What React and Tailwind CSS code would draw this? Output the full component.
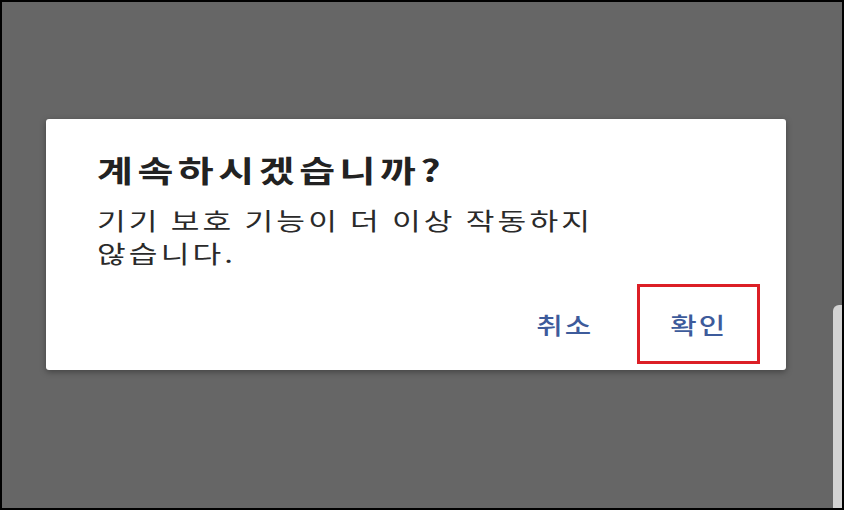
import React from 'react';

const FONT = { fontFamily: '"Noto Sans CJK KR", "Noto Sans", sans-serif' };

export default function App() {
  return (
    <div
      className="w-[844px] h-[510px] border-2 border-black bg-[#666666] flex overflow-hidden"
      style={FONT}
    >
      {/* dialog area */}
      <div className="flex-1 pl-[44px] pt-[117px]">
        <div className="w-[740px] h-[251px] bg-white rounded-[3px] shadow-[0_2px_6px_rgba(0,0,0,0.35)] flex flex-col">
          <div className="pl-[51px] pt-[30px]">
            <h1 className="origin-left scale-x-[1.3] text-[30px] leading-[40px] font-bold tracking-[3.5px] text-[#222]">
              계속하시겠습니까?
            </h1>
            <p className="origin-left scale-x-[1.3] mt-[14px] text-[24px] leading-[33px] tracking-[2.4px] text-[#2a2a2a]">
              기기 보호 기능이 더 이상 작동하지
              <br />
              않습니다.
            </p>
          </div>

          {/* actions */}
          <div className="mt-auto mb-[6px] mr-[26px] flex items-center justify-end">
            <button className="mr-[50px] text-[#3d5b9b]">
              <span className="block scale-x-[1.25] text-[23px] font-medium tracking-[1.5px]">취소</span>
            </button>
            <button className="w-[123px] h-[80px] border-[3px] border-[#dc1f26] text-[#3d5b9b] flex items-center justify-center">
              <span className="block scale-x-[1.25] text-[23px] font-medium tracking-[1.5px]">확인</span>
            </button>
          </div>
        </div>
      </div>

      {/* edge strip */}
      <div className="self-end w-[9px] h-[203px] rounded-tl-[6px] bg-[#d3d3d3]" />
    </div>
  );
}
